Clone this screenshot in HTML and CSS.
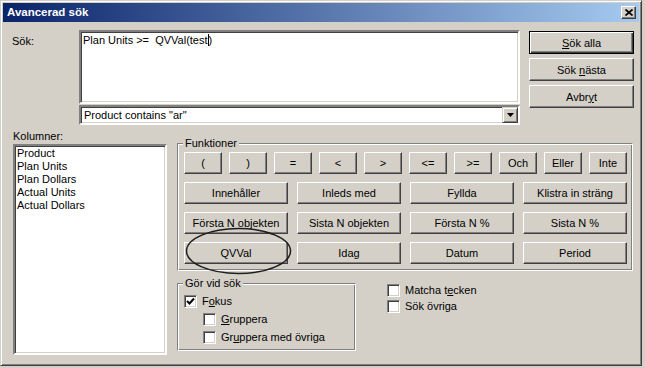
FILE: index.html
```html
<!DOCTYPE html>
<html lang="sv">
<head>
    <meta charset="UTF-8">
    <title>Avancerad sök</title>
    <link rel="stylesheet" href="styles.css">
</head>
<body>
    <div class="window">
        <div class="titlebar">
            <span class="title">Avancerad sök</span>
            <button class="close-btn">
                <svg width="8" height="7" viewBox="0 0 8 7"><path d="M0.5 0.5 L7.5 6.5 M7.5 0.5 L0.5 6.5" stroke="#000" stroke-width="1.7" fill="none"/></svg>
            </button>
        </div>
        <div class="dialog">
            <div class="search-row">
                <div class="search-label">Sök:</div>
                <div class="search-fields">
                    <div class="textarea">Plan Units &gt;=&nbsp; QVVal(test<span class="caret"></span>)</div>
                    <div class="combo">
                        <span class="combo-text">Product contains "ar"</span>
                        <span class="combo-btn">
                            <svg width="7" height="4" viewBox="0 0 7 4"><path d="M0 0 H7 L3.5 4 Z" fill="#000"/></svg>
                        </span>
                    </div>
                </div>
                <div class="actions">
                    <button class="btn btn-default"><u>S</u>ök alla</button>
                    <button class="btn">Sök <u>n</u>ästa</button>
                    <button class="btn">Avbr<u>y</u>t</button>
                </div>
            </div>

            <div class="lower-row">
                <div class="columns">
                    <div class="columns-label">Kolumner:</div>
                    <ul class="listbox">
                        <li>Product</li>
                        <li>Plan Units</li>
                        <li>Plan Dollars</li>
                        <li>Actual Units</li>
                        <li>Actual Dollars</li>
                    </ul>
                </div>

                <div class="right-pane">
                    <div class="group functions">
                        <span class="group-title">Funktioner</span>
                        <div class="op-grid">
                            <button class="btn">(</button>
                            <button class="btn">)</button>
                            <button class="btn">=</button>
                            <button class="btn">&lt;</button>
                            <button class="btn">&gt;</button>
                            <button class="btn">&lt;=</button>
                            <button class="btn">&gt;=</button>
                            <button class="btn">Och</button>
                            <button class="btn">Eller</button>
                            <button class="btn">Inte</button>
                        </div>
                        <div class="fn-grid">
                            <button class="btn">Innehåller</button>
                            <button class="btn">Inleds med</button>
                            <button class="btn">Fyllda</button>
                            <button class="btn">Klistra in sträng</button>
                            <button class="btn">Första N objekten</button>
                            <button class="btn">Sista N objekten</button>
                            <button class="btn">Första N %</button>
                            <button class="btn">Sista N %</button>
                            <button class="btn">QVVal</button>
                            <button class="btn">Idag</button>
                            <button class="btn">Datum</button>
                            <button class="btn">Period</button>
                        </div>
                        <!-- handritad markering runt QVVal -->
                        <svg class="highlight" width="107" height="48" viewBox="0 0 107 48">
                            <ellipse cx="53.5" cy="24" rx="52" ry="22.5" fill="none" stroke="#1e1e1e" stroke-width="1.5"/>
                        </svg>
                    </div>

                    <div class="options-row">
                        <div class="group search-opts">
                            <span class="group-title">Gör vid sök</span>
                            <label class="check">
                                <span class="cb">
                                    <svg width="9" height="9" viewBox="0 0 9 9"><path d="M1 4 L3.5 6.5 L8 1.5" stroke="#000" stroke-width="2" fill="none"/></svg>
                                </span>
                                <span>F<u>o</u>kus</span>
                            </label>
                            <label class="check indent"><span class="cb"></span><span><u>G</u>ruppera</span></label>
                            <label class="check indent"><span class="cb"></span><span>Gr<u>u</u>ppera med övriga</span></label>
                        </div>
                        <div class="check-col">
                            <label class="check"><span class="cb"></span><span>Matcha t<u>e</u>cken</span></label>
                            <label class="check"><span class="cb"></span><span>Sök övriga</span></label>
                        </div>
                    </div>
                </div>
            </div>
        </div>
    </div>
</body>
</html>
```

FILE: styles.css
```css
body {
    margin: 0;
    background-color: #d4d0c8;
    font-family: 'Liberation Sans', Arial, sans-serif;
    font-size: 11px;
    line-height: 13px;
    color: #000;
}
.window {
    width: 642px;
    height: 366px;
    box-sizing: border-box;
    border: 1px solid;
    border-color: #d4d0c8 #404040 #404040 #d4d0c8;
    box-shadow: inset 1px 1px #fff, inset -1px -1px #808080;
    padding: 2px;
    background-color: #d4d0c8;
}
.titlebar {
    height: 19px;
    display: flex;
    align-items: center;
    justify-content: space-between;
    padding: 0 3px 0 4px;
    background: linear-gradient(to right, #0a246a, #a6caf0);
}
.title {
    color: #fff;
    font-weight: bold;
    font-size: 11.5px;
}
.close-btn {
    width: 15px;
    height: 13px;
    padding: 0;
    display: flex;
    align-items: center;
    justify-content: center;
    background-color: #d4d0c8;
    border: 1px solid;
    border-color: #fff #404040 #404040 #fff;
    box-shadow: inset -1px -1px #808080;
}

/* knappar */
.btn {
    height: 22px;
    padding: 0;
    font-family: inherit;
    font-size: 11px;
    color: #000;
    background-color: #d4d0c8;
    border: 1px solid;
    border-color: #fff #404040 #404040 #fff;
    box-shadow: inset -1px -1px #808080;
    white-space: nowrap;
}
.btn-default {
    border-color: #000;
    box-shadow: inset 1px 1px #fff, inset -1px -1px #404040, inset -2px -2px #808080;
}

.dialog {
    padding: 8px 0 0 9px;
}
.search-row {
    display: flex;
}
.search-label {
    width: 67px;
    padding-top: 5px;
}
.search-fields {
    width: 441px;
}
.textarea {
    height: 74px;
    box-sizing: border-box;
    padding: 2px;
    background-color: #fff;
    border: 2px solid;
    border-color: #808080 #fff #fff #808080;
    box-shadow: inset 1px 1px #404040, inset -1px -1px #d4d0c8;
}
.caret {
    display: inline-block;
    width: 1px;
    height: 12px;
    background-color: #000;
    vertical-align: -2px;
}
.combo {
    margin-top: 1px;
    height: 20px;
    box-sizing: border-box;
    display: flex;
    align-items: center;
    justify-content: space-between;
    background-color: #fff;
    border: 2px solid;
    border-color: #808080 #fff #fff #808080;
    box-shadow: inset 1px 1px #404040, inset -1px -1px #d4d0c8;
}
.combo-text {
    padding-left: 3px;
}
.combo-btn {
    width: 16px;
    height: 16px;
    box-sizing: border-box;
    display: flex;
    align-items: center;
    justify-content: center;
    background-color: #d4d0c8;
    border: 1px solid;
    border-color: #d4d0c8 #404040 #404040 #d4d0c8;
    box-shadow: inset 1px 1px #fff, inset -1px -1px #808080;
}
.actions {
    margin-left: 9px;
    margin-top: 1px;
    width: 105px;
    display: flex;
    flex-direction: column;
    gap: 4px;
}
.actions .btn {
    height: 23px;
}

.lower-row {
    display: flex;
    margin-top: 5px;
}
.columns {
    margin-left: 1px;
    width: 154px;
}
.columns-label {
    margin-bottom: 1px;
}
.listbox {
    list-style: none;
    margin: 0;
    padding: 1px 2px;
    height: 211px;
    box-sizing: border-box;
    background-color: #fff;
    border: 2px solid;
    border-color: #808080 #fff #fff #808080;
    box-shadow: inset 1px 1px #404040, inset -1px -1px #d4d0c8;
}

.right-pane {
    margin-left: 10px;
    margin-top: 13px;
}
.group {
    position: relative;
    box-sizing: border-box;
    border: 1px solid;
    border-color: #808080 #fff #fff #808080;
    box-shadow: inset 1px 1px #fff, inset -1px -1px #808080;
}
.group-title {
    position: absolute;
    top: -7px;
    left: 5px;
    padding: 0 2px;
    background-color: #d4d0c8;
}
.functions {
    width: 456px;
    padding: 8px 5px 6px 6px;
}
.op-grid {
    display: grid;
    grid-template-columns: repeat(10, 38px);
    column-gap: 7px;
}
.fn-grid {
    margin-top: 8px;
    display: grid;
    grid-template-columns: repeat(4, 104px);
    gap: 8px 9px;
}
.highlight {
    position: absolute;
    left: 7px;
    top: 83px;
}

.options-row {
    display: flex;
    margin-top: 12px;
}
.search-opts {
    width: 179px;
    height: 68px;
    padding: 11px 0 0 6px;
    display: flex;
    flex-direction: column;
    gap: 5px;
}
.check {
    display: flex;
    align-items: center;
    gap: 5px;
    height: 13px;
}
.check.indent {
    margin-left: 19px;
}
.cb {
    width: 13px;
    height: 13px;
    box-sizing: border-box;
    display: flex;
    align-items: center;
    justify-content: center;
    background-color: #fff;
    border: 1px solid;
    border-color: #808080 #fff #fff #808080;
    box-shadow: inset 1px 1px #404040, inset -1px -1px #d4d0c8;
}
.check-col {
    margin-left: 31px;
    margin-top: 1px;
    display: flex;
    flex-direction: column;
    gap: 3px;
}
```
